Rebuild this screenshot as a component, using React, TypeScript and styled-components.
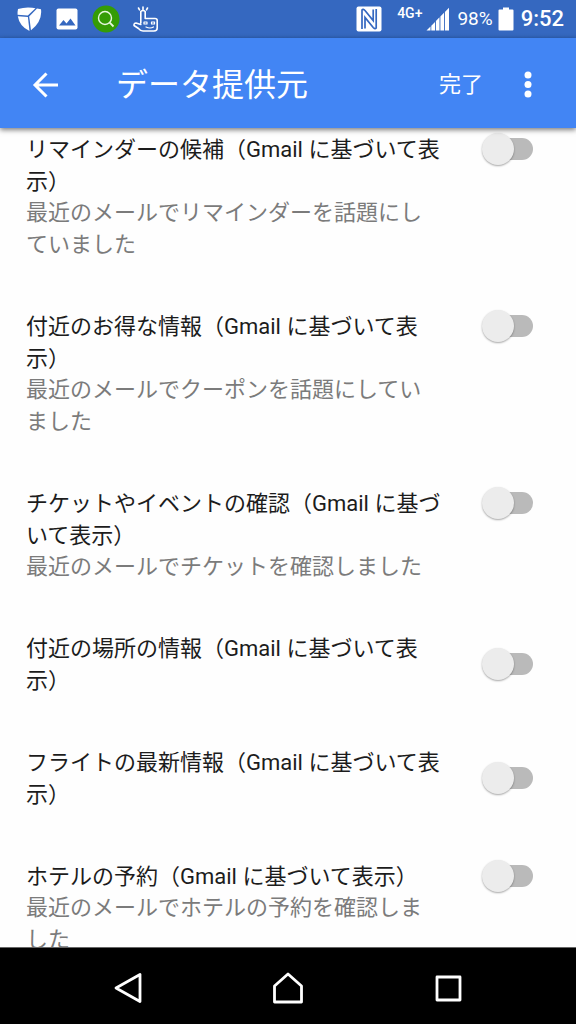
import React, { useState } from 'react';
import styled, { createGlobalStyle } from 'styled-components';

const GlobalStyle = createGlobalStyle`
  * { box-sizing: border-box; }
  body {
    margin: 0;
    background: #fefefe;
    font-family: Roboto, "Noto Sans CJK JP", sans-serif;
  }
`;

const Screen = styled.div`
  display: flex;
  flex-direction: column;
  height: 100vh;
`;

const StatusBar = styled.div`
  display: flex;
  flex: none;
  align-items: center;
  justify-content: space-between;
  height: 38px;
  padding: 0 12px 0 16px;
  background: linear-gradient(#3568c0 34px, #3063b8 38px);
  color: #fff;
`;

const StatusGroup = styled.div<{ $gap: number }>`
  display: flex;
  align-items: center;
  gap: ${(p) => p.$gap}px;
`;

const StatusText = styled.span<{ $size: number; $weight?: number }>`
  font-size: ${(p) => p.$size}px;
  font-weight: ${(p) => p.$weight ?? 400};
  line-height: 24px;
`;

const NetworkType = styled(StatusText)`
  align-self: flex-start;
  padding-left: 8px;
  line-height: 12px;
`;

const AppBar = styled.header`
  position: relative;
  z-index: 1;
  display: flex;
  flex: none;
  align-items: center;
  height: 90px;
  padding: 3px 44px 0 32px;
  background: #4285f4;
  color: #fff;
  box-shadow: 0 2px 5px rgba(0, 0, 0, 0.5);
`;

const BarButton = styled.button`
  display: flex;
  align-items: center;
  padding: 0;
  border: 0;
  background: none;
  color: inherit;
  font: inherit;
  font-size: 22px;
  line-height: 32px;
  cursor: pointer;
`;

const BarTitle = styled.h1`
  flex: 1;
  margin: 0 0 0 57px;
  font-size: 32px;
  font-weight: 400;
  line-height: 48px;
`;

const BarActions = styled.div`
  display: flex;
  align-items: center;
  gap: 41px;
`;

const List = styled.main`
  flex: 1;
  min-height: 0;
  padding-top: 6px;
  overflow-y: auto;
  scrollbar-width: none;
`;

const Row = styled.section<{ $centered: boolean }>`
  display: flex;
  align-items: ${(p) => (p.$centered ? 'center' : 'flex-start')};
  gap: 36px;
  margin-bottom: 50px;
  padding: 0 42px 0 26px;
`;

const RowText = styled.div`
  flex: 1;
`;

const RowTitle = styled.label`
  display: block;
  color: #1c1c1c;
  font-size: 22px;
  line-height: 32px;
`;

const RowNote = styled.p`
  margin: -1px 0 0;
  padding-right: 10px;
  color: #7b7b7b;
  font-size: 22px;
  line-height: 32px;
`;

const Switch = styled.input`
  position: relative;
  flex: none;
  width: 52px;
  height: 32px;
  margin: 0;
  appearance: none;
  cursor: pointer;

  &::before {
    content: '';
    position: absolute;
    inset: 4px 1px 6px 6px;
    border-radius: 11px;
    background: #bababa;
  }

  &::after {
    content: '';
    position: absolute;
    top: -1px;
    left: 0;
    width: 32px;
    height: 32px;
    border-radius: 50%;
    background: #ececec;
    box-shadow: 0 1px 2px rgba(0, 0, 0, 0.35);
  }

  &:checked::before { background: #a0c2f9; }
  &:checked::after { left: 20px; background: #4285f4; }
`;

const NavBar = styled.nav`
  display: flex;
  flex: none;
  align-items: center;
  justify-content: center;
  gap: 128px;
  height: 77px;
  padding-top: 4px;
  border-top: 1px solid #666;
  background: #000;
`;

const NavButton = styled(BarButton)`
  color: #fff;
`;

interface Source {
  title: string;
  note?: string;
}

const sources: Source[] = [
  { title: 'リマインダーの候補（Gmail に基づいて表示）', note: '最近のメールでリマインダーを話題にしていました' },
  { title: '付近のお得な情報（Gmail に基づいて表示）', note: '最近のメールでクーポンを話題にしていました' },
  { title: 'チケットやイベントの確認（Gmail に基づいて表示）', note: '最近のメールでチケットを確認しました' },
  { title: '付近の場所の情報（Gmail に基づいて表示）' },
  { title: 'フライトの最新情報（Gmail に基づいて表示）' },
  { title: 'ホテルの予約（Gmail に基づいて表示）', note: '最近のメールでホテルの予約を確認しました' },
];

const ShieldIcon = () => (
  <svg width="26" height="26" viewBox="0 0 26 26" fill="#fff" aria-hidden="true">
    <path d="M2 3Q7 1.500 12 1.500T19.500 2.300L11.800 9.500L1.600 8.800Q1.300 6 2 3Z" />
    <path d="M21 2.500L25 3.200Q26.500 15 15 24.300L13.200 10.500Z" />
    <path d="M1.800 10.300L11.900 11L13.500 25Q3.500 20.500 1.800 10.300Z" />
  </svg>
);

const PhotoIcon = () => (
  <svg width="24" height="22" viewBox="-1 0 24 22" aria-hidden="true">
    <rect x="0.500" y="0.500" width="21" height="21" rx="2" fill="#fff" />
    <path d="M3 17.500L7.500 12L10.500 15.500L14.500 10.500L19.500 17.500Z" fill="#3568c0" />
  </svg>
);

const SearchBadgeIcon = () => (
  <svg width="28" height="28" viewBox="0 0 28 28" fill="none" aria-hidden="true">
    <circle cx="14" cy="14" r="13.500" fill="#359c05" />
    <circle cx="13" cy="13" r="6.500" stroke="#e8f7df" strokeWidth="1.400" />
    <path d="M17.700 17.700L21.500 21.500" stroke="#e8f7df" strokeWidth="1.800" />
  </svg>
);

const TouchIcon = () => (
  <svg width="26" height="26" viewBox="0 0 26 26" fill="none" stroke="#fff" strokeWidth="1.600" strokeLinecap="round" strokeLinejoin="round" aria-hidden="true">
    <path d="M7.800 17V5.500Q10 3.500 12.200 5.500V12.500H22Q24.200 12.500 24.200 14.500V22Q24.200 25 21 25H10Q7.500 25 5.500 22.500L1 19.500Q0.800 17 3 17L7.800 18.500" />
    <path d="M10 3.500V1M6.500 3.800L5.500 2M13.500 3.800L14.500 2" />
    <path d="M11 18V16H14V18ZM18.500 18V16H21.500V18ZM13 21Q17 23 20.500 21" strokeWidth="1.200" />
  </svg>
);

const NfcIcon = () => (
  <svg width="26" height="26" viewBox="0 0 26 26" aria-hidden="true">
    <rect x="0.500" y="0.500" width="25" height="25" rx="2" fill="#fff" />
    <path d="M6 23V4Q7 2.500 9 4.500L17.200 14.500V3.500M20.200 3V22Q19 23.500 17.200 21.500L9 11.500V22.500" fill="none" stroke="#3568c0" strokeWidth="1.700" />
  </svg>
);

const SignalIcon = () => (
  <svg width="24" height="24" viewBox="0 0 24 24" fill="#fff" aria-hidden="true">
    <path d="M0.500 23.500L4.500 19.500V23.500ZM5.300 18.700L9 15V23.500H5.300ZM9.900 13.900L13.500 10.300V23.500H9.900ZM14.400 9.400L18 5.800V23.500H14.400ZM18.900 4.900L23 0.800V23.500H18.900Z" />
  </svg>
);

const BatteryIcon = () => (
  <svg width="16" height="24" viewBox="0 0 16 24" fill="#fff" aria-hidden="true">
    <path d="M5 0.500H11V2.500H14.500Q15.500 2.500 15.500 3.500V22.500Q15.500 23.500 14.500 23.500H1.500Q0.500 23.500 0.500 22.500V3.500Q0.500 2.500 1.500 2.500H5Z" />
  </svg>
);

const BackArrowIcon = () => (
  <svg width="27" height="28" viewBox="0 0 27 28" fill="none" stroke="#fff" strokeWidth="3" aria-hidden="true">
    <path d="M14.500 2.500L3 14L14.500 25.500M3 14H26" />
  </svg>
);

const MoreIcon = () => (
  <svg width="8" height="28" viewBox="0 0 8 28" fill="#fff" aria-hidden="true">
    <circle cx="4" cy="4" r="3.500" />
    <circle cx="4" cy="13.500" r="3.500" />
    <circle cx="4" cy="23" r="3.500" />
  </svg>
);

const NavIcon = ({ d }: { d: string }) => (
  <svg width="32" height="32" viewBox="0 0 32 32" fill="none" stroke="#fff" strokeWidth="2.800" strokeLinejoin="round" aria-hidden="true">
    <path d={d} />
  </svg>
);

function SourceRow({ source, id }: { source: Source; id: string }) {
  const [on, setOn] = useState(false);
  const noteId = source.note ? `${id}-note` : undefined;
  return (
    <Row $centered={!source.note}>
      <RowText>
        <RowTitle htmlFor={id}>{source.title}</RowTitle>
        {source.note && <RowNote id={noteId}>{source.note}</RowNote>}
      </RowText>
      <Switch
        type="checkbox"
        role="switch"
        id={id}
        aria-describedby={noteId}
        checked={on}
        onChange={(e) => setOn(e.target.checked)}
      />
    </Row>
  );
}

export default function App() {
  return (
    <>
      <GlobalStyle />
      <Screen lang="ja">
        <StatusBar>
          <StatusGroup $gap={13}>
            <ShieldIcon />
            <PhotoIcon />
            <SearchBadgeIcon />
            <TouchIcon />
          </StatusGroup>
          <StatusGroup $gap={7}>
            <NfcIcon />
            <StatusGroup $gap={4}>
              <NetworkType $size={14} $weight={500}>4G+</NetworkType>
              <SignalIcon />
            </StatusGroup>
            <StatusGroup $gap={5}>
              <StatusText $size={19}>98%</StatusText>
              <BatteryIcon />
            </StatusGroup>
            <StatusText $size={22} $weight={500}>9:52</StatusText>
          </StatusGroup>
        </StatusBar>
        <AppBar>
          <BarButton type="button" aria-label="戻る">
            <BackArrowIcon />
          </BarButton>
          <BarTitle>データ提供元</BarTitle>
          <BarActions>
            <BarButton type="button">完了</BarButton>
            <BarButton type="button" aria-label="その他">
              <MoreIcon />
            </BarButton>
          </BarActions>
        </AppBar>
        <List>
          {sources.map((source, i) => (
            <SourceRow key={source.title} source={source} id={`source-${i}`} />
          ))}
        </List>
        <NavBar>
          <NavButton type="button" aria-label="戻る">
            <NavIcon d="M28 2.500V29.500L4 16Z" />
          </NavButton>
          <NavButton type="button" aria-label="ホーム">
            <NavIcon d="M2.500 30V14L16 2L29.500 14V30Z" />
          </NavButton>
          <NavButton type="button" aria-label="最近使ったアプリ">
            <NavIcon d="M5 5H28V28H5Z" />
          </NavButton>
        </NavBar>
      </Screen>
    </>
  );
}
